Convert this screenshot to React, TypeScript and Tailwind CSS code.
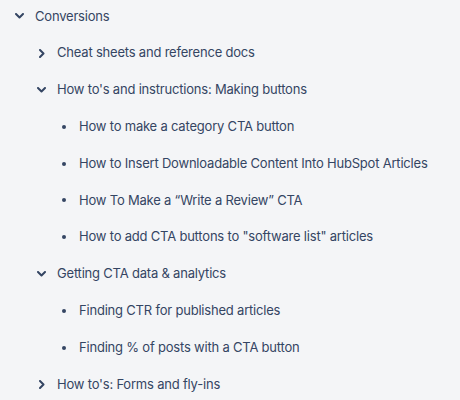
import React from "react";

type Row = { level: number; kind: "down" | "right" | "bullet"; text: string };

const rows: Row[] = [
  { level: 0, kind: "down", text: "Conversions" },
  { level: 1, kind: "right", text: "Cheat sheets and reference docs" },
  { level: 1, kind: "down", text: "How to's and instructions: Making buttons" },
  { level: 2, kind: "bullet", text: "How to make a category CTA button" },
  { level: 2, kind: "bullet", text: "How to Insert Downloadable Content Into HubSpot Articles" },
  { level: 2, kind: "bullet", text: "How To Make a \u201cWrite a Review\u201d CTA" },
  { level: 2, kind: "bullet", text: "How to add CTA buttons to \"software list\" articles" },
  { level: 1, kind: "down", text: "Getting CTA data & analytics" },
  { level: 2, kind: "bullet", text: "Finding CTR for published articles" },
  { level: 2, kind: "bullet", text: "Finding % of posts with a CTA button" },
  { level: 1, kind: "right", text: "How to's: Forms and fly-ins" },
];

function Down() {
  return (
    <svg width="9" height="6" viewBox="0 0 9 6" className="text-[#344563]">
      <path d="M1 1 L4.5 4.5 L8 1" fill="none" stroke="currentColor" strokeWidth="2" strokeLinecap="round" strokeLinejoin="round" />
    </svg>
  );
}

function Right() {
  return (
    <svg width="6" height="9" viewBox="0 0 6 9" className="text-[#344563]">
      <path d="M1 1 L4.5 4.5 L1 8" fill="none" stroke="currentColor" strokeWidth="2" strokeLinecap="round" strokeLinejoin="round" />
    </svg>
  );
}

export default function App() {
  return (
    <div className="w-[460px] h-[400px] bg-[#f4f5f7] overflow-hidden" style={{ fontFamily: "Inter, 'Noto Sans', sans-serif" }}>
      <div className="-mt-[2px]">
        {rows.map((r, i) => (
          <div key={i} className="flex items-center h-[36.8px] text-[13px] tracking-[-0.2px] text-[#344563] whitespace-nowrap">
            {r.level === 0 && (
              <div className="pl-[15px] w-[35px] flex items-center shrink-0">
                <Down />
              </div>
            )}
            {r.level === 1 && (
              <div className={`${r.kind === "down" ? "pl-[37px]" : "pl-[39px]"} w-[57px] flex items-center shrink-0`}>
                {r.kind === "down" ? <Down /> : <Right />}
              </div>
            )}
            {r.level === 2 && (
              <div className="pl-[62px] w-[79px] flex items-center shrink-0">
                <div className="w-[4px] h-[4px] rounded-full bg-[#344563]" />
              </div>
            )}
            <span>{r.text}</span>
          </div>
        ))}
      </div>
    </div>
  );
}
